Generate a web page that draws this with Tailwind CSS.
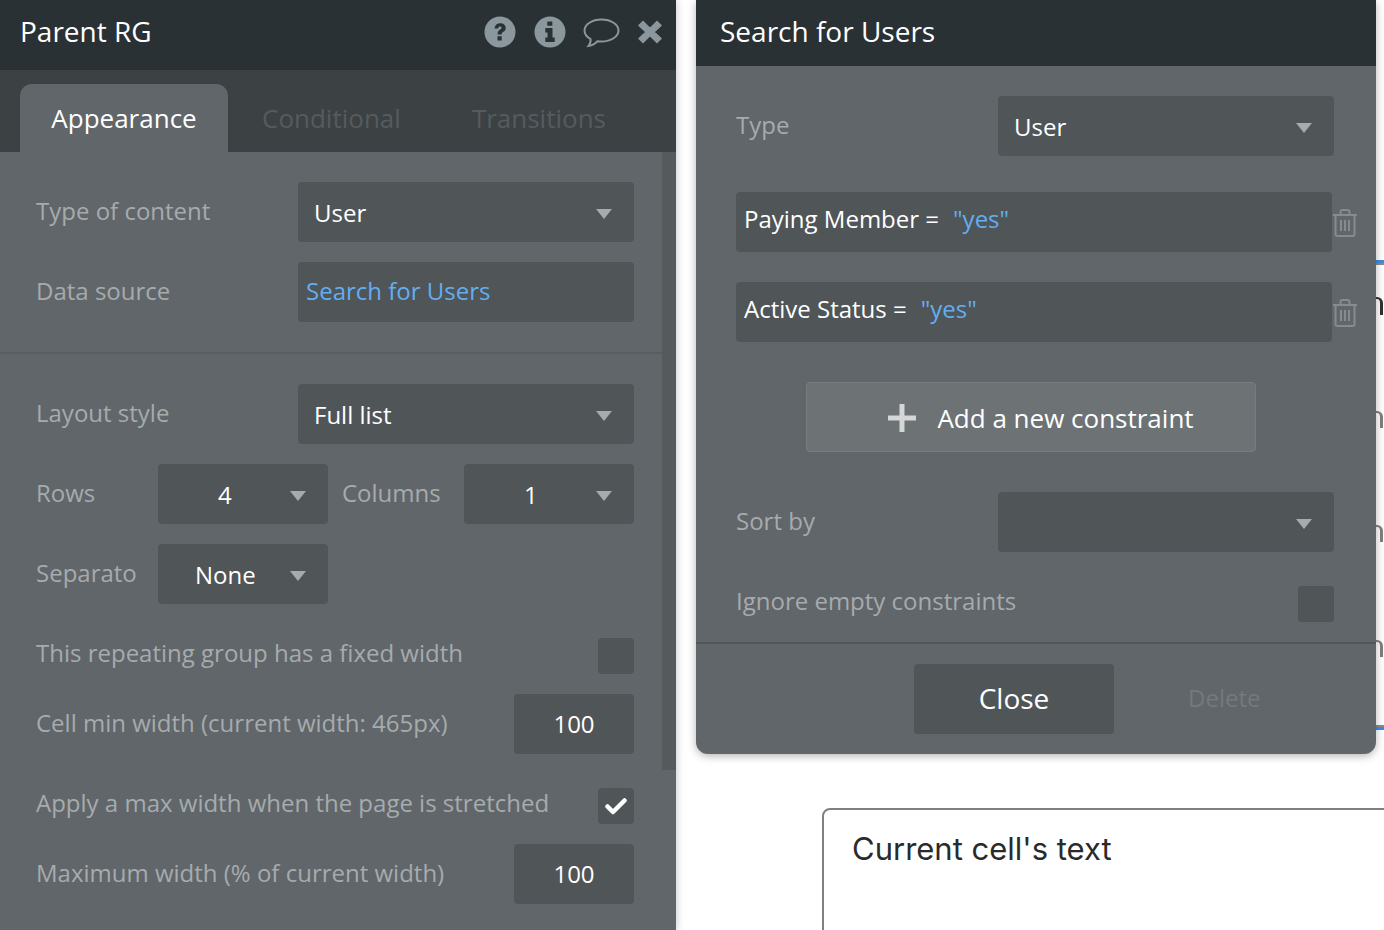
<!DOCTYPE html>
<html lang="en">
<head>
  <meta charset="UTF-8" />
  <title>Parent RG</title>
  <script src="https://cdn.jsdelivr.net/npm/@tailwindcss/browser@4"></script>
</head>
<body class="bg-white">
  <div class="relative w-[1384px] h-[930px] overflow-hidden bg-white font-['Open_Sans',sans-serif]">

    <!-- canvas behind the editors -->
    <div class="absolute left-[1376px] top-[260px] w-2 h-[3px] bg-[#3b8fe0]"></div>
    <div class="absolute left-[1376px] top-[263px] w-2 h-[2px] bg-[#8a8a8a]"></div>
    <div class="absolute left-[1376px] top-[725px] w-2 h-[2px] bg-[#8a8a8a]"></div>
    <div class="absolute left-[1376px] top-[727px] w-2 h-[3px] bg-[#3b8fe0]"></div>
    <div class="absolute left-[1376px] top-[297px] w-[7px] h-[18px] rounded-tr-md border-t-2 border-r-[3px] border-[#333]"></div>
    <div class="absolute left-[1376px] top-[411px] w-[7px] h-[17px] rounded-tr-md border-t-2 border-r-[3px] border-[#808080]"></div>
    <div class="absolute left-[1376px] top-[525px] w-[7px] h-[17px] rounded-tr-md border-t-2 border-r-[3px] border-[#808080]"></div>
    <div class="absolute left-[1376px] top-[640px] w-[7px] h-[17px] rounded-tr-md border-t-2 border-r-[3px] border-[#808080]"></div>

    <div class="absolute left-[822px] top-[808px] w-[700px] h-[200px] rounded-lg border-2 border-[#808080] pl-[28px] pt-[17px] text-[31px] leading-[44px] text-[#2a2a2a] font-['Inter',sans-serif]">Current cell's text</div>

    <!-- Parent RG editor -->
    <section class="absolute left-0 top-0 w-[676px] h-[930px] bg-[#61666a] shadow-[0_0_8px_rgba(0,0,0,0.25)]">
      <header class="h-[70px] bg-[#2a3134] flex items-center justify-between pl-5 pr-[13px]">
        <h1 class="text-[28px] text-white -mt-2">Parent RG</h1>
        <div class="flex items-center -mt-[6px]">
          <svg width="32" height="32" viewBox="0 0 32 32"><circle cx="16" cy="16" r="15.5" fill="#8a979c"/><path d="M10.5 12.5c.3-3.4 2.6-5.2 5.7-5.2 3.2 0 5.500 1.900 5.500 4.700 0 2-1 3.100-2.600 4.100-1.100.7-1.500 1.100-1.500 2.300h-4c-.1-2.400.7-3.500 2.300-4.600 1.100-.7 1.700-1.200 1.700-2 0-.9-.7-1.400-1.600-1.400-1 0-1.700.6-1.900 2.100z M13.500 20.300h4.200v4.200h-4.200z" fill="#2a3134"/></svg>
          <svg class="ml-[18px]" width="32" height="32" viewBox="0 0 32 32"><circle cx="16" cy="16" r="15.5" fill="#8a979c"/><path d="M13.300 5.500h5v4.300h-5z M11.300 12h7.200v9.600h2.200v4.400h-9.400v-4.400h2.200v-5.200h-2.200z" fill="#2a3134"/></svg>
          <svg class="ml-[16px]" width="38" height="32" viewBox="0 0 38 32"><path d="M19.500 3.500C10 3.500 2.500 8.500 2.500 14.500c0 3.600 2.500 6.500 6 8.500 .5 2.500 -.5 5 -2 7 3.500 -.5 7 -2.500 9 -4.800 1.300.2 2.700.3 4 .3 9.500 0 17 -5 17 -11S29 3.500 19.500 3.500z" fill="none" stroke="#8a979c" stroke-width="2"/></svg>
          <svg class="ml-[17px]" width="26" height="26" viewBox="0 0 26 26"><path d="M6 2.500 13 9.500 20 2.500 24 6.500 17 13 24 19.500 20 23.500 13 16.500 6 23.500 2 19.500 9 13 2 6.500z" fill="#8a979c" stroke="#8a979c" stroke-width="1.500" stroke-linejoin="round"/></svg>
        </div>
      </header>

      <nav class="h-[82px] bg-[#3c4144] flex items-end pl-5 text-[26px]">
        <div class="w-[208px] h-[68px] bg-[#61666a] rounded-t-xl text-white flex items-center justify-center">Appearance</div>
        <div class="h-[68px] flex items-center ml-[34px] text-[#565b5e]">Conditional</div>
        <div class="h-[68px] flex items-center ml-[71px] text-[#565b5e]">Transitions</div>
      </nav>

      <div class="relative pt-[30px] text-[24px] text-[#a6abad]">
        <div class="absolute right-0 top-0 w-[14px] h-[618px] bg-[#555a5d]"></div>

        <div class="pl-9 pr-[42px]">
          <div class="flex items-center h-[60px] mb-5">
            <span class="w-[262px] -mt-[2px]">Type of content</span>
            <div class="w-[336px] h-[60px] bg-[#505558] rounded-sm flex items-center justify-between pl-4 pr-[22px] text-white"><span class="mt-[2px]">User</span><svg class="mt-1" width="16" height="10" viewBox="0 0 16 10"><path d="M0 0h16L8 10z" fill="#a6abad"/></svg></div>
          </div>
          <div class="flex items-center h-[60px]">
            <span class="w-[262px] -mt-[2px]">Data source</span>
            <div class="w-[336px] h-[60px] bg-[#505558] rounded-sm flex items-center pl-2 text-[#63aef2]"><span class="-mt-[2px]">Search for Users</span></div>
          </div>
        </div>

        <div class="mt-[30px] mr-[14px] h-[2px] bg-[#585d60]"></div>

        <div class="pl-9 pr-[42px] pt-[30px]">
          <div class="flex items-center h-[60px] mb-5">
            <span class="w-[262px] -mt-[2px]">Layout style</span>
            <div class="w-[336px] h-[60px] bg-[#505558] rounded-sm flex items-center justify-between pl-4 pr-[22px] text-white"><span class="mt-[2px]">Full list</span><svg class="mt-1" width="16" height="10" viewBox="0 0 16 10"><path d="M0 0h16L8 10z" fill="#a6abad"/></svg></div>
          </div>
          <div class="flex items-center h-[60px] mb-5">
            <span class="w-[122px] -mt-[2px]">Rows</span>
            <div class="w-[170px] h-[60px] bg-[#505558] rounded-sm flex items-center justify-between pl-[60px] pr-[22px] text-white"><span class="mt-[2px]">4</span><svg class="mt-1" width="16" height="10" viewBox="0 0 16 10"><path d="M0 0h16L8 10z" fill="#a6abad"/></svg></div>
            <span class="w-[136px] pl-[14px] -mt-[2px]">Columns</span>
            <div class="w-[170px] h-[60px] bg-[#505558] rounded-sm flex items-center justify-between pl-[60px] pr-[22px] text-white"><span class="mt-[2px]">1</span><svg class="mt-1" width="16" height="10" viewBox="0 0 16 10"><path d="M0 0h16L8 10z" fill="#a6abad"/></svg></div>
          </div>
          <div class="flex items-center h-[60px] mb-[34px]">
            <span class="w-[122px] -mt-[2px]">Separato</span>
            <div class="w-[170px] h-[60px] bg-[#505558] rounded-sm flex items-center justify-between pl-[37px] pr-[22px] text-white"><span class="mt-[2px]">None</span><svg class="mt-1" width="16" height="10" viewBox="0 0 16 10"><path d="M0 0h16L8 10z" fill="#a6abad"/></svg></div>
          </div>
          <div class="flex items-center justify-between h-9 mb-5">
            <span class="-mt-1.5">This repeating group has a fixed width</span>
            <div class="w-9 h-9 bg-[#505558] rounded-sm"></div>
          </div>
          <div class="flex items-center justify-between h-[60px] mb-[34px]">
            <span class="-mt-[2px]">Cell min width (current width: 465px)</span>
            <div class="w-[120px] h-[60px] bg-[#505558] rounded-sm flex items-center justify-center text-white">100</div>
          </div>
          <div class="flex items-center justify-between h-9 mb-5">
            <span class="-mt-1.5">Apply a max width when the page is stretched</span>
            <div class="w-9 h-9 bg-[#505558] rounded-sm flex items-center justify-center">
              <svg width="22" height="18" viewBox="0 0 22 18"><path d="M2.500 9.500 8 15 19.500 3.500" fill="none" stroke="#fff" stroke-width="4.500" stroke-linejoin="round" stroke-linecap="round"/></svg>
            </div>
          </div>
          <div class="flex items-center justify-between h-[60px]">
            <span class="-mt-[2px]">Maximum width (% of current width)</span>
            <div class="w-[120px] h-[60px] bg-[#505558] rounded-sm flex items-center justify-center text-white">100</div>
          </div>
        </div>
      </div>
    </section>

    <!-- Search for Users editor -->
    <section class="absolute left-[696px] top-0 w-[680px] h-[754px] rounded-b-xl bg-[#61666a] shadow-[0_2px_8px_rgba(0,0,0,0.3)] text-[24px] text-[#a6abad]">
      <header class="h-[66px] bg-[#2a3134] flex items-center pl-6">
        <h2 class="text-[28px] text-white -mt-1">Search for Users</h2>
      </header>

      <div class="pt-[30px] pl-10 pr-[42px]">
        <div class="flex items-center h-[60px] mb-9">
          <span class="w-[262px] -mt-[2px]">Type</span>
          <div class="w-[336px] h-[60px] bg-[#505558] rounded-sm flex items-center justify-between pl-4 pr-[22px] text-white"><span class="mt-[2px]">User</span><svg class="mt-1" width="16" height="10" viewBox="0 0 16 10"><path d="M0 0h16L8 10z" fill="#a6abad"/></svg></div>
        </div>

        <div class="relative w-[596px] h-[60px] bg-[#505558] rounded-sm flex items-center pl-2 text-white mb-[30px]">
          <span class="-mt-1.5">Paying Member =</span><span class="ml-3.5 -mt-1.5 text-[#63aef2]">"yes"</span>
          <svg class="absolute -right-[26px] top-4" width="26" height="30" viewBox="0 0 26 30" fill="none" stroke="#858b8e" stroke-width="2"><path d="M1 7h24M8.500 7V4a2 2 0 0 1 2-2h5a2 2 0 0 1 2 2v3M3.500 7v19a2 2 0 0 0 2 2h15a2 2 0 0 0 2-2V7M9 12v11M13 12v11M17 12v11"/></svg>
        </div>
        <div class="relative w-[596px] h-[60px] bg-[#505558] rounded-sm flex items-center pl-2 text-white">
          <span class="-mt-1.5">Active Status =</span><span class="ml-3.5 -mt-1.5 text-[#63aef2]">"yes"</span>
          <svg class="absolute -right-[26px] top-4" width="26" height="30" viewBox="0 0 26 30" fill="none" stroke="#858b8e" stroke-width="2"><path d="M1 7h24M8.500 7V4a2 2 0 0 1 2-2h5a2 2 0 0 1 2 2v3M3.500 7v19a2 2 0 0 0 2 2h15a2 2 0 0 0 2-2V7M9 12v11M13 12v11M17 12v11"/></svg>
        </div>

        <div class="mt-10 ml-[70px] w-[450px] h-[70px] rounded bg-[#6d7275] border border-[#777c7f] flex items-center justify-center text-white text-[26px] pl-[20px]">
          <svg class="mr-[21px] mt-[2px]" width="28" height="28" viewBox="0 0 28 28"><path d="M11.500 0h5v11.500H28v5H16.500V28h-5V16.500H0v-5h11.500z" fill="#d6d6d6"/></svg>
          <span class="mt-[2px]">Add a new constraint</span>
        </div>

        <div class="flex items-center h-[60px] mt-10 mb-[34px]">
          <span class="w-[262px] -mt-[2px]">Sort by</span>
          <div class="w-[336px] h-[60px] bg-[#505558] rounded-sm flex items-center justify-end pr-[22px]"><svg class="mt-1" width="16" height="10" viewBox="0 0 16 10"><path d="M0 0h16L8 10z" fill="#a6abad"/></svg></div>
        </div>
        <div class="flex items-center justify-between h-9">
          <span class="-mt-1.5">Ignore empty constraints</span>
          <div class="w-9 h-9 bg-[#505558] rounded-sm"></div>
        </div>
      </div>

      <div class="mt-5 h-[2px] bg-[#505558]"></div>

      <div class="mt-[20px] relative flex justify-center pr-[44px]">
        <div class="w-[200px] h-[70px] bg-[#505558] rounded-sm flex items-center justify-center text-white text-[28px]"><span class="-mt-[3px]">Close</span></div>
        <div class="absolute left-[492px] top-0 h-[70px] flex items-center text-[#74797c] text-[24px]"><span class="-mt-[3px]">Delete</span></div>
      </div>
    </section>
  </div>
</body>
</html>
